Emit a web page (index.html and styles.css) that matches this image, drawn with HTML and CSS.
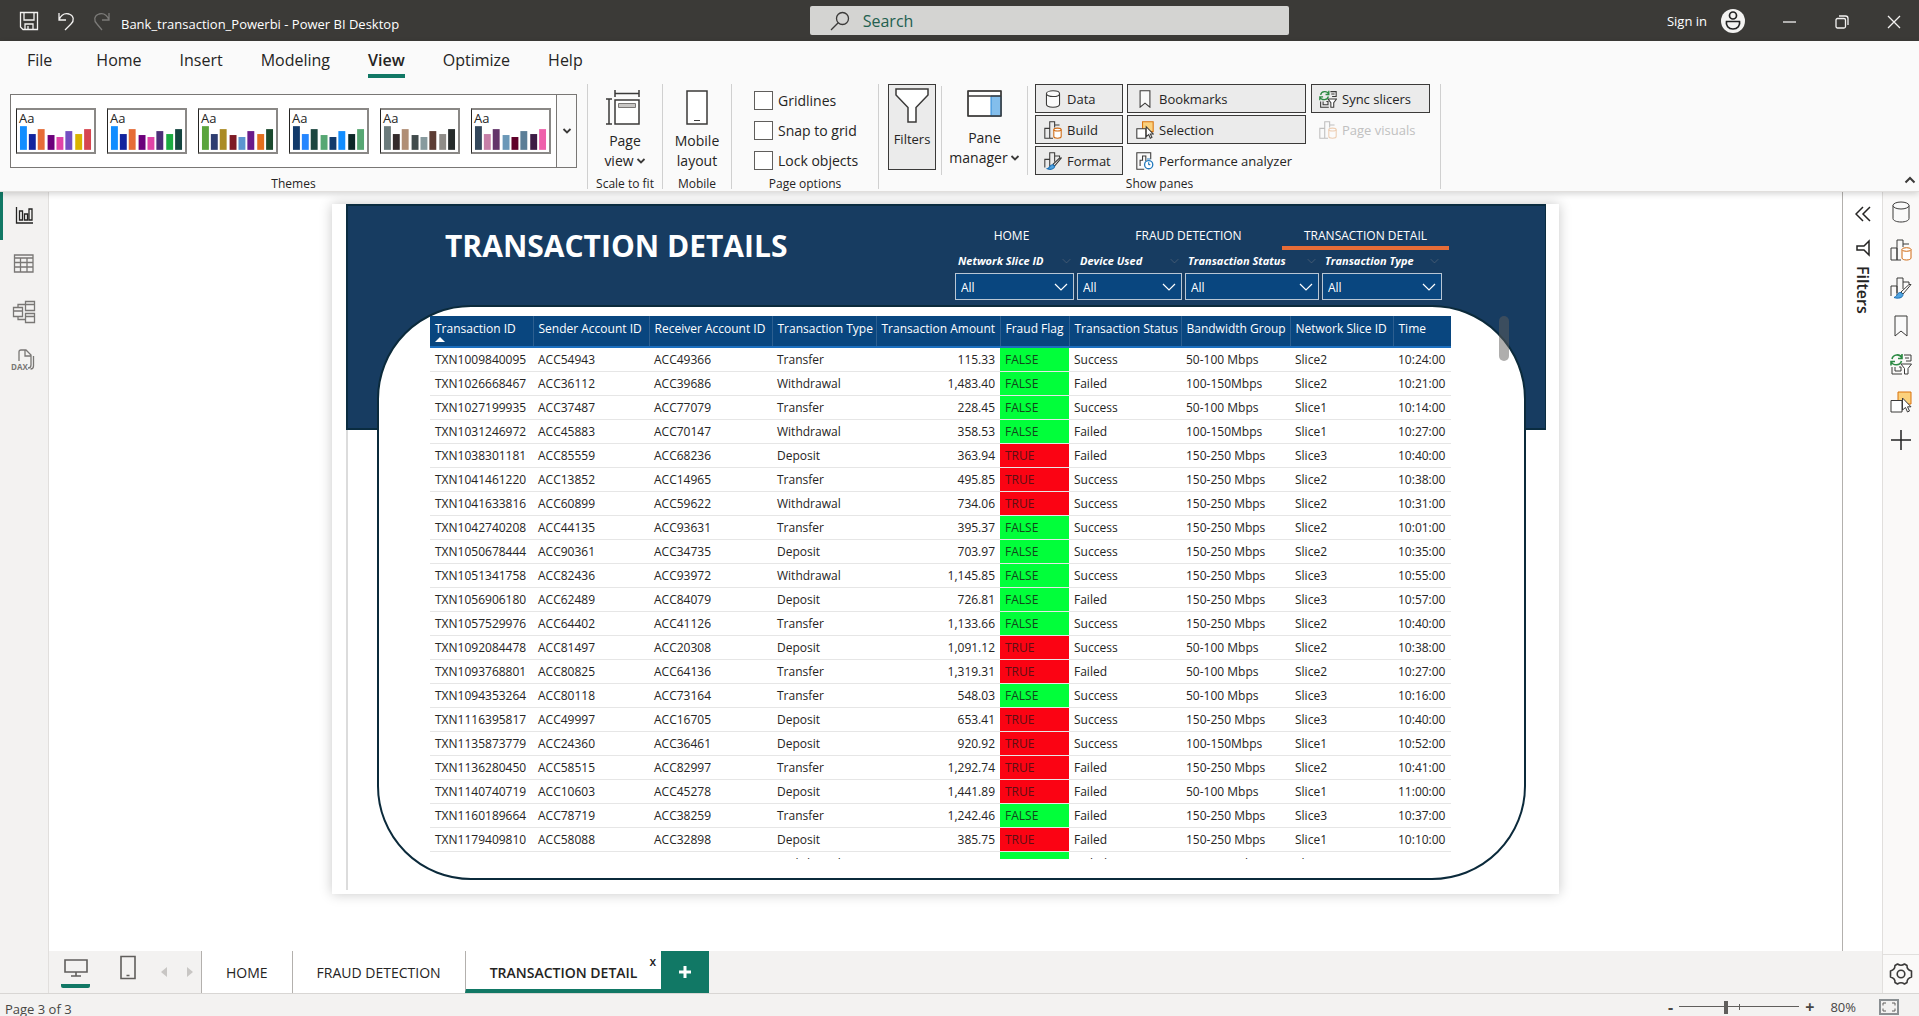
FILE: index.html
```html
<!DOCTYPE html>
<html lang="en">
<head>
<meta charset="utf-8">
<title>Bank_transaction_Powerbi - Power BI Desktop</title>
<link rel="stylesheet" href="styles.css">
</head>
<body>
<svg class="sprite" aria-hidden="true">
  <symbol id="i-data" viewBox="0 0 22 22"><path d="M3 4.500v13c0 2 3.500 3.500 8 3.500s8-1.500 8-3.500v-13" fill="#fafafa"/><ellipse cx="11" cy="4.500" rx="8" ry="3.500" fill="#fafafa"/></symbol>
  <symbol id="i-build" viewBox="0 0 22 22"><path d="M1 21V9h6v12zM7 21V1h6v7M13 5h6M7 21h4" fill="none"/><path d="M12 10.500v8.500c0 1.200 2 2 4.500 2s4.500-.8 4.500-2v-8.500" fill="#fff" stroke="#d06a12"/><ellipse cx="16.500" cy="10.500" rx="4.500" ry="1.800" fill="#fff" stroke="#d06a12"/></symbol>
  <symbol id="i-format" viewBox="0 0 22 22"><path d="M1 19V9h6v9M7 16V1h6v11M13 5h6v2" fill="none"/><path d="M21 7.500L13 17l-2-2 8-7.500z" fill="#fff"/><path d="M11 15.500c-4-.5-3 3.500-7 5 4 1.500 9 .5 9-3z" fill="#4fa3e0" stroke="#1b6fb5"/></symbol>
  <symbol id="i-bookmark" viewBox="0 0 22 22"><path d="M5 1h12v20l-6-5-6 5z" fill="#fafafa"/></symbol>
  <symbol id="i-sync" viewBox="0 0 22 22"><path d="M14 2h7v6h-5M15 5h4M2 14v7h10M5 14v4h6v-4h-2" fill="none"/><path d="M11 11h10.500L18 15.500V21h-3.500v-5.500z" fill="#fff"/><path d="M12 5C10 .5 3 1 2 6M12 1v4.500H8M1 8.500c2 4.500 9 4.500 10.500-.5M1 12.500V8.500h4" fill="none" stroke="#2c8a43" stroke-width="1.600"/></symbol>
  <symbol id="i-select" viewBox="0 0 22 22"><path d="M8 1h13v12H8z" fill="#fbd17c" stroke="#d9730d"/><path d="M1 9.500h11V21H1z" fill="#fff"/><path d="M12.500 7v12l3-2.500 2 4.500 2-1-2-4.200H21z" fill="#fff"/></symbol>
  <symbol id="i-chev" viewBox="0 0 10 10"><path d="M1.500 3L5 6.500 8.500 3" fill="none" stroke-width="1.800"/></symbol>
  <symbol id="i-thin" viewBox="0 0 14 8"><path d="M1 1l6 6 6-6" fill="none"/></symbol>
</svg>

<header class="titlebar">
  <div class="quick">
    <button aria-label="Save"><svg width="20" height="20" viewBox="0 0 20 20"><path d="M1.500 1.500h17v17H4l-2.500-2.500zM5 1.500v7.500h10V1.500M6 18.500V13h8v5.500M9 18v-3" /></svg></button>
    <button aria-label="Undo"><svg width="18" height="20" viewBox="0 0 18 20"><path d="M2 2v7h7M2 9C4 4 8 2 12 3c5 1.500 5.500 6.500 2 10l-6 6"/></svg></button>
    <button aria-label="Redo" class="off"><svg width="18" height="20" viewBox="0 0 18 20"><path d="M16 2v7H9M16 9C14 4 10 2 6 3 1 4.500.5 9.500 4 13l5 6"/></svg></button>
    <span class="doc">Bank_transaction_Powerbi - Power BI Desktop</span>
  </div>
  <label class="search"><svg width="20" height="20" viewBox="0 0 20 20"><circle cx="12.500" cy="7.500" r="6"/><path d="M8.200 11.800L1 19"/></svg><input type="text" placeholder="Search" aria-label="Search"></label>
  <div class="account">
    <a href="#">Sign in</a>
    <svg class="avatar" width="24" height="24" viewBox="0 0 24 24"><circle cx="12" cy="12" r="12" fill="#f3f2f1"/><g fill="none" stroke="#222" stroke-width="1.700"><circle cx="12" cy="6.500" r="3.500"/><path d="M5.500 12.500h13c1 4-2 7.500-6.500 7.500s-7.500-3.500-6.500-7.500z"/></g></svg>
    <button aria-label="Minimize"><svg width="14" height="14" viewBox="0 0 14 14"><path d="M0 7h13"/></svg></button>
    <button aria-label="Restore"><svg width="14" height="14" viewBox="0 0 14 14"><rect x="1" y="3.500" width="9.500" height="9.500" rx="1.500"/><path d="M4 1h6.500q2.500 0 2.500 2.500V10"/></svg></button>
    <button aria-label="Close"><svg width="14" height="14" viewBox="0 0 14 14"><path d="M1 1l12 12M13 1L1 13"/></svg></button>
  </div>
</header>

<section class="ribbon">
  <nav class="menu">
    <a href="#">File</a><a href="#">Home</a><a href="#">Insert</a><a href="#">Modeling</a><a href="#" class="on">View</a><a href="#">Optimize</a><a href="#">Help</a>
  </nav>
  <div class="groups">
    <div class="group themes">
      <div class="gallery">
        <button class="theme">Aa<svg viewBox="0 0 76 24"><rect x="2" width="7" height="24" fill="#118dff"/><rect x="11" y="8" width="7" height="16" fill="#12239e"/><rect x="20" y="3" width="7" height="21" fill="#e66c37"/><rect x="30" y="9" width="7" height="15" fill="#6b007b"/><rect x="39" y="11" width="7" height="13" fill="#e044a7"/><rect x="48" y="5" width="7" height="19" fill="#744ec2"/><rect x="58" y="8" width="7" height="16" fill="#d9b300"/><rect x="67" y="3" width="7" height="21" fill="#d64550"/></svg></button>
        <button class="theme">Aa<svg viewBox="0 0 76 24"><rect x="2" width="7" height="24" fill="#118dff"/><rect x="11" y="8" width="7" height="16" fill="#12239e"/><rect x="20" y="3" width="7" height="21" fill="#e66c37"/><rect x="30" y="9" width="7" height="15" fill="#6b007b"/><rect x="39" y="11" width="7" height="13" fill="#e044a7"/><rect x="48" y="5" width="7" height="19" fill="#4b2e77"/><rect x="58" y="8" width="7" height="16" fill="#1aab40"/><rect x="67" y="3" width="7" height="21" fill="#14443f"/></svg></button>
        <button class="theme">Aa<svg viewBox="0 0 76 24"><rect x="2" width="7" height="24" fill="#5aa43c"/><rect x="11" y="8" width="7" height="16" fill="#2e3d70"/><rect x="20" y="3" width="7" height="21" fill="#ab8b24"/><rect x="30" y="9" width="7" height="15" fill="#7e1a25"/><rect x="39" y="11" width="7" height="13" fill="#5b95d0"/><rect x="48" y="5" width="7" height="19" fill="#6a1b8a"/><rect x="58" y="8" width="7" height="16" fill="#e4701e"/><rect x="67" y="3" width="7" height="21" fill="#1b4a2e"/></svg></button>
        <button class="theme">Aa<svg viewBox="0 0 76 24"><rect x="2" width="7" height="24" fill="#123a6b"/><rect x="11" y="8" width="7" height="16" fill="#2486ff"/><rect x="20" y="3" width="7" height="21" fill="#1c4640"/><rect x="30" y="9" width="7" height="15" fill="#57a773"/><rect x="39" y="11" width="7" height="13" fill="#123a6b"/><rect x="48" y="5" width="7" height="19" fill="#118dff"/><rect x="58" y="8" width="7" height="16" fill="#0c2727"/><rect x="67" y="3" width="7" height="21" fill="#57a773"/></svg></button>
        <button class="theme">Aa<svg viewBox="0 0 76 24"><rect x="2" width="7" height="24" fill="#6b7b7c"/><rect x="11" y="8" width="7" height="16" fill="#332a2b"/><rect x="20" y="3" width="7" height="21" fill="#b08e75"/><rect x="30" y="9" width="7" height="15" fill="#414b4c"/><rect x="39" y="11" width="7" height="13" fill="#879a9e"/><rect x="48" y="5" width="7" height="19" fill="#5c3c33"/><rect x="58" y="8" width="7" height="16" fill="#8f8c88"/><rect x="67" y="3" width="7" height="21" fill="#252a2a"/></svg></button>
        <button class="theme">Aa<svg viewBox="0 0 76 24"><rect x="2" width="7" height="24" fill="#33475b"/><rect x="11" y="8" width="7" height="16" fill="#c77fa8"/><rect x="20" y="3" width="7" height="21" fill="#63346a"/><rect x="30" y="9" width="7" height="15" fill="#6b98b8"/><rect x="39" y="11" width="7" height="13" fill="#5f0029"/><rect x="48" y="5" width="7" height="19" fill="#5b7e97"/><rect x="58" y="8" width="7" height="16" fill="#3d1c45"/><rect x="67" y="3" width="7" height="21" fill="#ef60ab"/></svg></button>
        <button class="more" aria-label="More themes"><svg width="10" height="10"><use href="#i-chev"/></svg></button>
      </div>
      <h2>Themes</h2>
    </div>
    <div class="group scale">
      <button class="big"><svg width="36" height="36" viewBox="0 0 36 36"><path d="M10 3.500h24M10 0v7M34 0v7M4 9v25M1 9h6M1 34h6" fill="none" stroke-width="1.500"/><path d="M10 10h24v24H10z" fill="#fff" stroke-width="1.500"/><path d="M13.500 13.500h17v4h-17z" fill="#c8c6c4" stroke="#797775"/></svg><span>Page<br>view<svg class="c" width="10" height="10"><use href="#i-chev"/></svg></span></button>
      <h2>Scale to fit</h2>
    </div>
    <div class="group mobile">
      <button class="big"><svg width="36" height="36" viewBox="0 0 36 36"><path d="M8 1h20v33H8z" fill="#fff" stroke-width="1.500"/><path d="M15 30.500h6"/></svg><span>Mobile<br>layout</span></button>
      <h2>Mobile</h2>
    </div>
    <div class="group options">
      <div class="checks">
        <label><input type="checkbox">Gridlines</label>
        <label><input type="checkbox">Snap to grid</label>
        <label><input type="checkbox">Lock objects</label>
      </div>
      <h2>Page options</h2>
    </div>
    <div class="group panes">
      <div class="panerow">
        <button class="big filters"><svg width="36" height="36" viewBox="0 0 36 36"><path d="M2 1h32v6L22 19.500V34h-8V19.500L2 7z" fill="#fff" stroke-width="1.500"/></svg><span>Filters</span></button>
        <button class="big manager"><svg width="36" height="36" viewBox="0 0 36 36"><path d="M1 4h33v25H1z" fill="#fff"/><path d="M24 9h10v20H24z" fill="#83beec" stroke="#2b88d8"/><path d="M1 4h33v25H1zM1 9h33" fill="none" stroke-width="1.500"/></svg><span>Pane<br>manager<svg class="c" width="10" height="10"><use href="#i-chev"/></svg></span></button>
        <div class="toggles">
          <button class="on"><svg><use href="#i-data"/></svg>Data</button>
          <button class="on"><svg><use href="#i-bookmark"/></svg>Bookmarks</button>
          <button class="on sync"><svg><use href="#i-sync"/></svg>Sync slicers</button>
          <button class="on"><svg><use href="#i-build"/></svg>Build</button>
          <button class="on"><svg><use href="#i-select"/></svg>Selection</button>
          <button class="sync" disabled><svg><use href="#i-build"/></svg>Page visuals</button>
          <button class="on"><svg><use href="#i-format"/></svg>Format</button>
          <button><svg viewBox="0 0 22 22"><path d="M10 21H1V1h17v8M5 17V10h3V5h4v6" fill="none"/><circle cx="15.500" cy="15.500" r="5" fill="#fff" stroke="#2079bd" stroke-width="1.600"/><path d="M15.500 15.500V12.500M13.500 8.500h4M15.500 15.500h2" stroke="#2079bd" stroke-width="1.400"/></svg>Performance analyzer</button>
        </div>
      </div>
      <h2>Show panes</h2>
    </div>
    <button class="collapse" aria-label="Collapse ribbon"><svg width="12" height="12" viewBox="0 0 12 12"><path d="M1.500 8.500L6 4l4.500 4.500" fill="none" stroke-width="2"/></svg></button>
  </div>
</section>

<div class="work">
  <nav class="views">
    <button class="on" aria-label="Report view"><svg width="22" height="22" viewBox="0 0 22 22"><path d="M3.500 2v16H20M6.500 15V6h3v9zM11.500 15V9h3v6zM16 15V4h3v11z"/></svg></button>
    <button aria-label="Table view"><svg width="22" height="22" viewBox="0 0 22 22"><path d="M1.500 2h18.500v17H1.500zM1.500 5H20M1.500 9.500H20M1.500 14H20M7.500 5v14M14 5v14"/></svg></button>
    <button aria-label="Model view"><svg width="24" height="24" viewBox="0 0 24 24"><path d="M1.500 7.500h9v9h-9zM1.500 11h9M13.500 1.500h9v9h-9zM13.500 4.500h9M13.500 13.500h9v9h-9zM13.500 16.500h9M6 7.500v-3h7.500M6 16.500v3h7.500"/></svg></button>
    <button aria-label="DAX query view"><span class="dax"><svg width="22" height="22" viewBox="0 0 22 22"><path d="M6 12V3q0-2 2-2h5l5 5v10q0 3-3 3M12 1v6h6M20.500 7v10q0 3-3 3"/></svg><b>DAX</b></span></button>
  </nav>

  <div class="center">
    <div class="stage">
      <main class="canvas">
        <div class="page">
          <div class="report">
            <div class="band"></div>
            <div class="content">
              <div class="head">
                <h1>TRANSACTION DETAILS</h1>
                <div class="controls">
                  <nav class="pages"><a href="#">HOME</a><a href="#">FRAUD DETECTION</a><a href="#" class="on">TRANSACTION DETAIL</a></nav>
                  <div class="slicers">
                    <div><label for="s1">Network Slice ID</label><svg><use href="#i-thin"/></svg><select id="s1"><option>All</select></div>
                    <div><label for="s2">Device Used</label><svg><use href="#i-thin"/></svg><select id="s2"><option>All</select></div>
                    <div><label for="s3">Transaction Status</label><svg><use href="#i-thin"/></svg><select id="s3"><option>All</select></div>
                    <div><label for="s4">Transaction Type</label><svg><use href="#i-thin"/></svg><select id="s4"><option>All</select></div>
                  </div>
                </div>
              </div>
              <div class="panel">
                <div class="tablebox">
                <table>
                  <colgroup><col class="w1"><col class="w2"><col class="w3"><col class="w4"><col class="w5"><col class="w6"><col class="w7"><col class="w8"><col class="w9"><col class="w10"></colgroup>
                  <thead><tr><th><span class="sorted">Transaction ID</span></th><th>Sender Account ID</th><th>Receiver Account ID</th><th>Transaction Type</th><th>Transaction Amount</th><th>Fraud Flag</th><th>Transaction Status</th><th>Bandwidth Group</th><th>Network Slice ID</th><th>Time</th></tr></thead>
                  <tbody>
                  <tr><td>TXN1009840095<td>ACC54943<td>ACC49366<td>Transfer<td>115.33<td class="ok">FALSE<td>Success<td>50-100 Mbps<td>Slice2<td>10:24:00
                  <tr><td>TXN1026668467<td>ACC36112<td>ACC39686<td>Withdrawal<td>1,483.40<td class="ok">FALSE<td>Failed<td>100-150Mbps<td>Slice2<td>10:21:00
                  <tr><td>TXN1027199935<td>ACC37487<td>ACC77079<td>Transfer<td>228.45<td class="ok">FALSE<td>Success<td>50-100 Mbps<td>Slice1<td>10:14:00
                  <tr><td>TXN1031246972<td>ACC45883<td>ACC70147<td>Withdrawal<td>358.53<td class="ok">FALSE<td>Failed<td>100-150Mbps<td>Slice1<td>10:27:00
                  <tr><td>TXN1038301181<td>ACC85559<td>ACC68236<td>Deposit<td>363.94<td class="bad">TRUE<td>Failed<td>150-250 Mbps<td>Slice3<td>10:40:00
                  <tr><td>TXN1041461220<td>ACC13852<td>ACC14965<td>Transfer<td>495.85<td class="bad">TRUE<td>Success<td>150-250 Mbps<td>Slice2<td>10:38:00
                  <tr><td>TXN1041633816<td>ACC60899<td>ACC59622<td>Withdrawal<td>734.06<td class="bad">TRUE<td>Success<td>150-250 Mbps<td>Slice2<td>10:31:00
                  <tr><td>TXN1042740208<td>ACC44135<td>ACC93631<td>Transfer<td>395.37<td class="ok">FALSE<td>Success<td>150-250 Mbps<td>Slice2<td>10:01:00
                  <tr><td>TXN1050678444<td>ACC90361<td>ACC34735<td>Deposit<td>703.97<td class="ok">FALSE<td>Success<td>150-250 Mbps<td>Slice2<td>10:35:00
                  <tr><td>TXN1051341758<td>ACC82436<td>ACC93972<td>Withdrawal<td>1,145.85<td class="ok">FALSE<td>Success<td>150-250 Mbps<td>Slice3<td>10:55:00
                  <tr><td>TXN1056906180<td>ACC62489<td>ACC84079<td>Deposit<td>726.81<td class="ok">FALSE<td>Failed<td>150-250 Mbps<td>Slice3<td>10:57:00
                  <tr><td>TXN1057529976<td>ACC64402<td>ACC41126<td>Transfer<td>1,133.66<td class="ok">FALSE<td>Success<td>150-250 Mbps<td>Slice2<td>10:40:00
                  <tr><td>TXN1092084478<td>ACC81497<td>ACC20308<td>Deposit<td>1,091.12<td class="bad">TRUE<td>Success<td>50-100 Mbps<td>Slice2<td>10:38:00
                  <tr><td>TXN1093768801<td>ACC80825<td>ACC64136<td>Transfer<td>1,319.31<td class="bad">TRUE<td>Failed<td>50-100 Mbps<td>Slice2<td>10:27:00
                  <tr><td>TXN1094353264<td>ACC80118<td>ACC73164<td>Transfer<td>548.03<td class="ok">FALSE<td>Success<td>50-100 Mbps<td>Slice3<td>10:16:00
                  <tr><td>TXN1116395817<td>ACC49997<td>ACC16705<td>Deposit<td>653.41<td class="bad">TRUE<td>Success<td>150-250 Mbps<td>Slice3<td>10:40:00
                  <tr><td>TXN1135873779<td>ACC24360<td>ACC36461<td>Deposit<td>920.92<td class="bad">TRUE<td>Success<td>100-150Mbps<td>Slice1<td>10:52:00
                  <tr><td>TXN1136280450<td>ACC58515<td>ACC82997<td>Transfer<td>1,292.74<td class="bad">TRUE<td>Failed<td>150-250 Mbps<td>Slice2<td>10:41:00
                  <tr><td>TXN1140740719<td>ACC10603<td>ACC45278<td>Deposit<td>1,441.89<td class="bad">TRUE<td>Failed<td>50-100 Mbps<td>Slice1<td>11:00:00
                  <tr><td>TXN1160189664<td>ACC78719<td>ACC38259<td>Transfer<td>1,242.46<td class="ok">FALSE<td>Failed<td>150-250 Mbps<td>Slice3<td>10:37:00
                  <tr><td>TXN1179409810<td>ACC58088<td>ACC32898<td>Deposit<td>385.75<td class="bad">TRUE<td>Failed<td>150-250 Mbps<td>Slice1<td>10:10:00
                  <tr><td>TXN1180327706<td>ACC52080<td>ACC30029<td>Withdrawal<td>820.60<td class="ok">FALSE<td>Failed<td>150-250 Mbps<td>Slice2<td>10:32:00
                  </tbody>
                </table>
                </div>
                <div class="thumb"></div>
              </div>
            </div>
          </div>
        </div>
      </main>
      <aside class="filterpane">
        <button aria-label="Expand"><svg width="16" height="16" viewBox="0 0 16 16"><path d="M8 1L1 8l7 7M15 1L8 8l7 7" stroke-width="1.500"/></svg></button>
        <svg width="16" height="18" viewBox="0 0 16 18"><path d="M14 2v14L9 11H2V7h7z" stroke-width="1.500"/></svg>
        <span>Filters</span>
      </aside>
    </div>
    <div class="tabs">
      <button class="dev on" aria-label="Desktop layout"><svg width="26" height="20" viewBox="0 0 26 20"><path d="M2 2h22v12H2zM13 14v4M8 18h10"/></svg></button>
      <button class="dev" aria-label="Mobile layout"><svg width="18" height="26" viewBox="0 0 18 26"><path d="M2 1.500h14v22H2zM7.500 20.500h3"/></svg></button>
      <button class="arrow" aria-label="Previous"><svg width="8" height="12" viewBox="0 0 8 12"><path d="M7 1v10L1 6z"/></svg></button>
      <button class="arrow" aria-label="Next"><svg width="8" height="12" viewBox="0 0 8 12"><path d="M1 1v10l6-5z"/></svg></button>
      <a href="#">HOME</a><a href="#">FRAUD DETECTION</a><a href="#" class="on">TRANSACTION DETAIL<span>x</span></a>
      <button class="add" aria-label="New page"><svg width="14" height="14" viewBox="0 0 14 14"><path d="M7 1v12M1 7h12" stroke="#fff" stroke-width="3"/></svg></button>
    </div>
  </div>

  <nav class="rail">
    <button aria-label="Data"><svg><use href="#i-data"/></svg></button>
    <button aria-label="Build"><svg><use href="#i-build"/></svg></button>
    <button aria-label="Format"><svg><use href="#i-format"/></svg></button>
    <button aria-label="Bookmarks"><svg><use href="#i-bookmark"/></svg></button>
    <button aria-label="Sync slicers"><svg><use href="#i-sync"/></svg></button>
    <button aria-label="Selection"><svg><use href="#i-select"/></svg></button>
    <button aria-label="Add"><svg viewBox="0 0 22 22"><path d="M11 1v20M1 11h20" stroke="#222" stroke-width="1.500"/></svg></button>
    <button class="gear" aria-label="Settings"><svg viewBox="0 0 24 24"><path d="M8.500 2q3.500 2.500 7 0l2.500 1.500q-.3 4.300 4.500 5.500v6q-4.500 1.200-4.500 5.500l-2.500 1.500q-3.500-2.500-7 0l-2.500-1.500q.3-4.300-4.500-5.500v-6q4.500-1.200 4.500-5.500z" fill="none" stroke-width="1.600" stroke-linejoin="round"/><circle cx="12" cy="12" r="3.800" fill="none" stroke-width="1.600"/></svg></button>
  </nav>
</div>

<footer class="status">
  <span>Page 3 of 3</span>
  <div class="zoom">
    <button>-</button>
    <input type="range" min="10" max="190" value="80" aria-label="Zoom">
    <button>+</button>
    <span>80%</span>
    <svg width="20" height="16" viewBox="0 0 20 16"><path d="M1 1h18v14H1z" stroke-width="2" stroke="#8a8f92"/><path d="M4 6.500V4h3M13 4h3v2.500M4 9.500V12h3M13 12h3V9.500"/></svg>
  </div>
</footer>
</body>
</html>
```
FILE: styles.css
```css
* { box-sizing: border-box; }

body {
  margin: 0;
  height: 100vh;
  display: flex;
  flex-direction: column;
  overflow: hidden;
  font-family: "Open Sans", "Noto Sans", sans-serif;
  font-size: 13px;
  color: #252423;
  background: #f3f2f1;
}

button, input, select { font: inherit; color: inherit; }
button { border: 0; padding: 0; background: none; }
a { color: inherit; text-decoration: none; }
h1, h2 { margin: 0; }
svg { display: block; flex: none; stroke: #3b3a39; }
.sprite { position: absolute; width: 0; height: 0; }

/* Title bar */
.titlebar {
  flex: none;
  height: 41px;
  display: grid;
  grid-template-columns: minmax(0, 4fr) 479px minmax(0, 3fr);
  column-gap: 20px;
  align-items: center;
  padding-right: 18px;
  background: #3b3a37;
  color: #fff;
}
.titlebar svg { stroke: #f3f2f1; fill: none; stroke-width: 1.3; }
.quick { display: flex; align-items: center; gap: 18px; padding-left: 19px; }
.quick .off { opacity: .35; }
.doc { padding-top: 6px; margin-left: -8px; white-space: nowrap; }
.search {
  height: 29px;
  display: flex;
  align-items: center;
  gap: 13px;
  padding-left: 20px;
  background: #d4d4d2;
  border-radius: 2px;
}
.titlebar .search svg { stroke: #3b3a39; }
.search input { flex: 1; border: 0; padding: 0; background: none; font-size: 16px; outline: 0; }
.search input::placeholder { color: #23604f; opacity: 1; }
.account { display: flex; align-items: center; justify-content: flex-end; font-size: 13px; }
.account .avatar { margin: 0 38px 0 14px; stroke: none; }
.account button { padding-top: 3px; }
.account button + button { margin-left: 38px; }

/* Ribbon */
.ribbon {
  flex: none;
  position: relative;
  height: 151px;
  background: #fafafa;
  border-bottom: 1px solid #e1dfdd;
  box-shadow: 0 2px 6px rgba(0, 0, 0, .16);
}
.menu { display: flex; gap: 38px; padding-left: 27px; font-size: 16px; line-height: 39px; height: 43px; }
.menu a:first-child { margin-right: 6px; }
.menu .on { font-weight: 600; border-bottom: 4px solid #117865; height: 37px; }
.groups { display: flex; height: 105px; }
.group { display: flex; flex-direction: column; justify-content: space-between; border-right: 1px solid #d0d0d0; }
.group h2 { font-size: 12px; font-weight: 400; line-height: 16px; height: 13px; margin-top: auto; text-align: center; white-space: nowrap; }
.themes { width: 588px; padding-left: 10px; }
.themes h2 { padding-right: 10px; }
.gallery {
  width: 567px;
  height: 74px;
  margin-top: 10px;
  display: flex;
  align-items: center;
  gap: 11px;
  padding-left: 5px;
  background: #fff;
  border: 1px solid #797775;
}
.theme {
  width: 80px;
  height: 46px;
  border: 2px solid #8a8886;
  border-left: 1px solid #252423;
  text-align: left;
  line-height: 15px;
  padding: 0 0 2px 2px;
  background: #fff;
}
.theme svg { width: 75px; height: 24px; stroke: none; margin-left: -1px; }
.more { align-self: stretch; flex: 1; display: flex; align-items: center; justify-content: center; border-left: 1px solid #797775; margin-left: -6px; background: #fafafa; }
.scale { width: 75px; }
.mobile { width: 69px; }
.options { width: 147px; }
.panes { width: 562px; }
.big { display: flex; flex-direction: column; align-items: center; gap: 5px; padding-top: 6px; font-size: 14px; line-height: 20px; width: 100%; }
.scale .big svg:first-child { margin-right: 4px; }
.c { display: inline-block; margin-left: 2px; stroke: #3b3a39; }
.checks { display: flex; flex-direction: column; gap: 11px; padding: 7px 0 0 22px; font-size: 14px; }
.checks label { display: flex; align-items: center; gap: 5px; height: 19px; }
.checks input { appearance: none; width: 19px; height: 19px; margin: 0; border: 1px solid #605e5c; background: #fff; }
.panerow { display: flex; padding-left: 9px; }
.filters { width: 48px; height: 86px; border: 1px solid #3b3a39; background: #ebebeb; padding-top: 3px; font-size: 13px; }
.manager { width: 87px; margin: 2px 7px 0 5px; padding-top: 1px; border: 1px solid #d0d0d0; border-width: 0 1px; height: 89px; }
.toggles { display: grid; grid-template-columns: 88px 179px 119px; gap: 2px 4px; }
.toggles button { height: 29px; display: flex; align-items: center; gap: 5px; padding-left: 8px; border: 1px solid transparent; white-space: nowrap; }
.toggles .on { border-color: #3b3a39; background: #ebebeb; }
.toggles .sync { margin: 0 -1px 0 1px; padding-left: 7px; }
.toggles svg { width: 18px; height: 18px; stroke-width: 1.3; }
.toggles button:disabled { color: #c0c0c0; }
.toggles button:disabled svg { opacity: .3; }
.collapse { margin: auto 3px 3px auto; }

/* Work area */
.work { flex: 1; min-height: 0; display: flex; }
.views { flex: none; width: 49px; border-right: 1px solid #e1dfdd; display: flex; flex-direction: column; }
.views button { height: 48px; display: flex; align-items: center; justify-content: center; border-left: 3px solid transparent; padding-right: 3px; }
.views .on { border-color: #117865; }
.views svg { fill: none; stroke: #797775; stroke-width: 1.3; }
.views .on svg { stroke: #252423; }
.dax { display: grid; }
.dax svg, .dax b { grid-area: 1 / 1; }
.dax b { align-self: end; justify-self: start; font-size: 8px; line-height: 8px; margin-left: -2px; background: #f3f2f1; color: #797775; }
.center { flex: 1; min-width: 0; display: flex; flex-direction: column; }
.stage { flex: 1; min-height: 0; display: flex; background: #fff; }
.canvas { flex: 1; min-width: 0; padding-top: 12px; overflow: hidden; }
.page { max-width: 1227px; margin: 0 auto; padding: 0 13px 4px 14px; background: #fff; box-shadow: 0 0 12px rgba(0, 0, 0, .22); }
.report { display: grid; border-left: 2px solid #dcdcdc; }
.band, .content { grid-area: 1 / 1; }
.band { height: 226px; margin-left: -2px; background: #173c61; border: 2px solid #0a2c40; border-right-width: 1px; }
.content { padding: 0 20px 10px 29px; }

.head { height: 101px; display: flex; justify-content: space-between; padding-left: 68px; }
h1 { font-size: 30px; line-height: 40px; padding-top: 22px; color: #fff; font-weight: 700; white-space: nowrap; }
.controls { width: 571px; padding-top: 22px; color: #fff; }
.pages { display: flex; justify-content: flex-end; gap: 10px; padding-right: 77px; }
.pages a { flex: none; width: 167px; height: 24px; line-height: 20px; text-align: center; font-size: 12px; white-space: nowrap; border-bottom: 4px solid transparent; }
.pages .on { border-color: #e66c37; }
.slicers { display: grid; grid-template-columns: 119px 105px 134px 120px; gap: 3px; padding-top: 3px; }
.slicers div { display: grid; grid-template-columns: 1fr auto; align-items: center; row-gap: 4px; }
.slicers label { padding-left: 3px; font-size: 11px; line-height: 16px; font-weight: 700; font-style: italic; white-space: nowrap; }
.slicers svg { width: 9px; height: 6px; margin-right: 3px; stroke: #5c6b7d; }
.slicers select {
  grid-column: span 2;
  height: 27px;
  appearance: none;
  border: 1px solid #b8c6d4;
  border-radius: 0;
  padding: 2px 5px 0;
  font-size: 12px;
  background: #09467f url("data:image/svg+xml,%3Csvg xmlns='http://www.w3.org/2000/svg' width='14' height='8'%3E%3Cpath d='M1 1l6 6 6-6' fill='none' stroke='white' stroke-width='1.2'/%3E%3C/svg%3E") no-repeat right 5px center;
}

.panel { height: 575px; display: flex; padding: 9px 0 0 51px; background: #fff; border: 2px solid #0b2a3b; border-radius: 94px; }
.tablebox { width: 1021px; height: 543px; overflow: hidden; }
table { width: 100%; table-layout: fixed; border-collapse: collapse; font-size: 12px; line-height: 16px; white-space: nowrap; }
.w1 { width: 103px; } .w2 { width: 116px; } .w3 { width: 123px; } .w4 { width: 104px; } .w5 { width: 124px; }
.w6 { width: 69px; } .w7 { width: 112px; } .w8 { width: 109px; } .w9 { width: 103px; } .w10 { width: 58px; }
th { height: 31px; padding: 5px 0 0 5px; vertical-align: top; text-align: left; font-weight: 400; color: #fff; background: #09467f; border-bottom: 2px solid #1c6fbf; }
th + th { border-left: 1px solid #2d5f90; }
.sorted::after { content: ""; display: block; width: 0; border: 5px solid transparent; border-top: 0; border-bottom-color: #fff; }
td { height: 24px; padding: 2px 0 0 5px; border-bottom: 1px solid #e6e6e6; }
td:nth-child(5) { text-align: right; padding: 2px 5px 0 0; }
.ok { background: #01ff3a; color: #12471c; }
.bad { background: #fb0313; color: #5c1013; }
.thumb { width: 10px; height: 45px; margin: 0 0 0 48px; border-radius: 5px; background: rgba(96, 94, 92, .5); }

.filterpane { flex: none; width: 40px; border-left: 1px solid #b3b0ad; padding-top: 14px; display: flex; flex-direction: column; align-items: center; gap: 17px; }
.filterpane svg { fill: none; stroke: #252423; }
.filterpane span { writing-mode: vertical-rl; font-size: 16px; font-weight: 600; line-height: 20px; margin-top: -8px; }

.tabs { flex: none; height: 42px; display: flex; font-size: 14px; }
.dev { width: 29px; display: flex; justify-content: center; padding-top: 7px; margin-left: 12px; border-bottom: 4px solid transparent; margin-bottom: 5px; }
.dev + .dev { margin: 0 18px 0 23px; padding-top: 4px; }
.dev.on { border-color: #117865; border-radius: 2px; }
.tabs svg { fill: none; stroke-width: 1.6; stroke: #605e5c; }
.tabs .arrow { width: 8px; margin-right: 18px; }
.tabs .arrow + .arrow { margin-right: 7px; }
.tabs .arrow svg { fill: #c8c6c4; stroke: none; }
.tabs a { display: flex; padding: 3px 24px 0; line-height: 38px; background: #fff; border-left: 1px solid #b3b0ad; white-space: nowrap; }
.tabs a.on { font-weight: 600; border-bottom: 4px solid #117865; padding-right: 5px; }
.tabs a span { line-height: 16px; font-size: 12px; margin-left: 12px; }
.tabs .add { width: 48px; display: flex; align-items: center; justify-content: center; background: #117865; }

.rail { flex: none; width: 37px; background: #faf9f8; border-left: 1px solid #e1dfdd; display: flex; flex-direction: column; gap: 16px; align-items: center; padding-top: 9px; }
.rail button { flex: none; }
.rail svg { width: 22px; height: 22px; }
.rail .gear { margin-top: auto; width: 100%; height: 39px; display: flex; align-items: center; justify-content: center; border-top: 1px solid #e1dfdd; }
.rail .gear svg { width: 24px; height: 24px; }

.status { flex: none; height: 23px; overflow: hidden; display: flex; justify-content: space-between; align-items: flex-start; padding: 4px 20px 0 5px; border-top: 1px solid #d8d6d4; color: #484644; line-height: 22px; }
.zoom { display: flex; align-items: center; height: 22px; margin-top: -2px; }
.zoom button { font-size: 16px; font-weight: 700; }
.zoom input { appearance: none; width: 120px; height: 14px; margin: 0 6px; background: linear-gradient(#605e5c, #605e5c) 0 6px / 100% 1px no-repeat, linear-gradient(#605e5c, #605e5c) 60px 4px / 1px 6px no-repeat; }
.zoom input::-webkit-slider-thumb { appearance: none; width: 4px; height: 13px; background: #605e5c; }
.zoom span { margin: 0 23px 0 16px; }
.zoom svg { fill: none; stroke: #605e5c; }
```
